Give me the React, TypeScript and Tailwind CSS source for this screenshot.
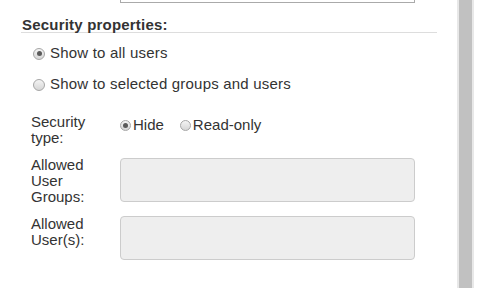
import React from 'react';

const Radio = ({ checked = false, size = 12 }: { checked?: boolean; size?: number }) => (
  <span
    className={`flex shrink-0 items-center justify-center rounded-full border border-[#a6a6a6] bg-linear-to-b from-[#f4f4f4] to-[#d6d6d6] ${
      size === 12 ? 'h-[12px] w-[12px]' : 'h-[11px] w-[11px]'
    }`}
  >
    {checked && <span className="h-[5px] w-[5px] rounded-full bg-[#5a5a5a]" />}
  </span>
);

const FieldRow = ({ label, children }: { label: React.ReactNode; children: React.ReactNode }) => (
  <div className="flex items-start pl-[10px]">
    <div className="w-[89px] shrink-0 text-[15px] leading-[16px] text-[#333]">{label}</div>
    {children}
  </div>
);

export default function App() {
  return (
    <div
      className="flex h-[288px] w-[477px] overflow-hidden bg-white text-[#333]"
      style={{ fontFamily: '"Liberation Sans", Arial, sans-serif' }}
    >
      <div className="w-[457px] shrink-0 pl-[21px] pr-[20px]">
        {/* previous field, cut off by the top of the viewport */}
        <div className="-mt-[37px] ml-[99px] h-[40px] w-[295px] border border-[#aaaaaa] bg-white" />

        <h3 className="mt-[15px] border-b border-[#dddddd] pl-[1px] text-[15px] font-bold leading-[14px] tracking-[0.2px] text-[#333]">
          Security properties:
        </h3>

        <div className="mt-[5px] tracking-[0.2px]">
          <label className="flex h-[31px] items-center gap-[5px] pl-[12px] text-[15px]">
            <Radio checked />
            <span>Show to all users</span>
          </label>
          <label className="flex h-[31px] items-center gap-[5px] pl-[12px] text-[15px]">
            <Radio />
            <span>Show to selected groups and users</span>
          </label>
        </div>

        <div className="mt-[14px] flex flex-col gap-[11px]">
          <FieldRow
            label={
              <>
                Security
                <br />
                type:
              </>
            }
          >
            <div className="flex items-center pt-[3px] text-[15px] leading-[16px]">
              <Radio checked size={11} />
              <span className="ml-[2px]">Hide</span>
              <span className="ml-[16px]">
                <Radio size={11} />
              </span>
              <span className="ml-[2px]">Read-only</span>
            </div>
          </FieldRow>

          <FieldRow
            label={
              <>
                Allowed
                <br />
                User
                <br />
                Groups:
              </>
            }
          >
            <div className="mt-[1px] h-[44px] w-[295px] rounded-[4px] border border-[#cccccc] bg-[#eeeeee]" />
          </FieldRow>

          <FieldRow
            label={
              <>
                Allowed
                <br />
                User(s):
              </>
            }
          >
            <div className="h-[44px] w-[295px] rounded-[4px] border border-[#cccccc] bg-[#eeeeee]" />
          </FieldRow>
        </div>
      </div>

      {/* scrollbar */}
      <div className="flex w-[17px] shrink-0 bg-[#e8e8e8] px-[2px]">
        <div className="flex-1 bg-[#c1c1c1]" />
      </div>
    </div>
  );
}
